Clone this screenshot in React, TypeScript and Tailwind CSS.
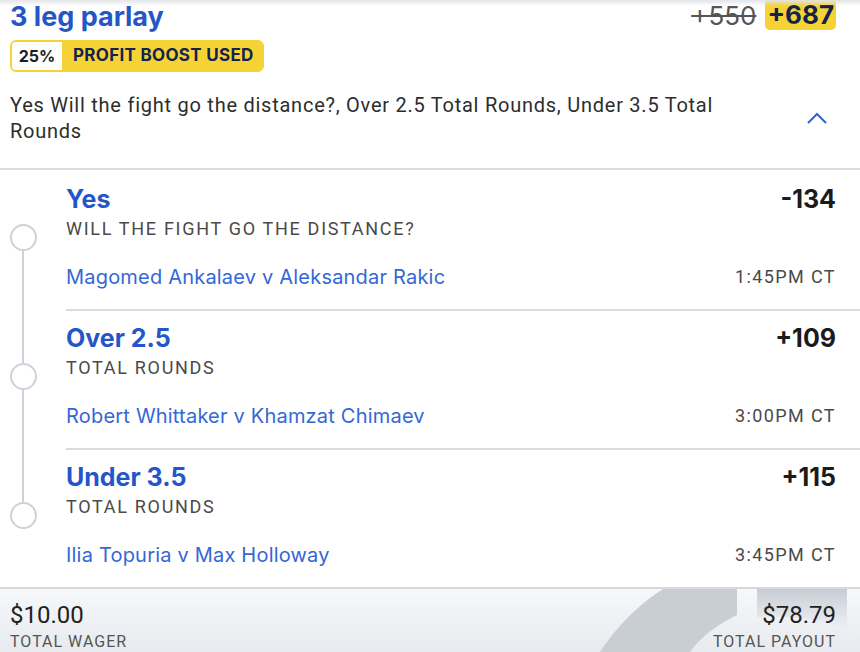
import React from "react";

type Leg = {
  pick: string;
  market: string;
  matchup: string;
  odds: string;
  time: string;
};

const legs: Leg[] = [
  {
    pick: "Yes",
    market: "WILL THE FIGHT GO THE DISTANCE?",
    matchup: "Magomed Ankalaev v Aleksandar Rakic",
    odds: "-134",
    time: "1:45PM CT",
  },
  {
    pick: "Over 2.5",
    market: "TOTAL ROUNDS",
    matchup: "Robert Whittaker v Khamzat Chimaev",
    odds: "+109",
    time: "3:00PM CT",
  },
  {
    pick: "Under 3.5",
    market: "TOTAL ROUNDS",
    matchup: "Ilia Topuria v Max Holloway",
    odds: "+115",
    time: "3:45PM CT",
  },
];

const sans = "font-['Inter','Open_Sans',sans-serif]";
const narrow = "font-['Roboto','Liberation_Sans',sans-serif]";

function LegRow({ leg, index }: { leg: Leg; index: number }) {
  const first = index === 0;
  const last = index === legs.length - 1;
  return (
    <div className="flex h-[139px]">
      {/* timeline rail */}
      <div className="flex w-[66px] shrink-0 flex-col">
        <div className="flex w-[46px] flex-col items-center">
          <div className={`h-[54px] w-[2px] ${first ? "bg-transparent" : "bg-[#cdd2d9]"}`} />
          <div className="h-[27px] w-[27px] rounded-full border-2 border-[#cdd2d9] bg-white" />
          <div className={`h-[58px] w-[2px] ${last ? "bg-transparent" : "bg-[#cdd2d9]"}`} />
        </div>
      </div>
      <div className={`flex flex-1 flex-col pr-6 ${first ? "" : "border-t-2 border-[#d8dce1]"}`}>
        <div className={`flex items-start justify-between ${first ? "pt-[15px]" : "pt-[13px]"}`}>
          <div className={`${sans} text-[25px] font-bold leading-[28px] text-[#2456c8]`}>{leg.pick}</div>
          <div className={`${sans} text-[25px] font-bold leading-[28px] text-[#1b1b1b]`}>{leg.odds}</div>
        </div>
        <div className={`${narrow} mt-[5px] text-[18px] leading-[22px] tracking-[1.7px] text-[#4a4a4a]`}>
          {leg.market}
        </div>
        <div className="mt-[25px] flex items-center justify-between">
          <div className={`${sans} text-[20px] leading-[24px] tracking-[0.2px] text-[#3467d6]`}>{leg.matchup}</div>
          <div className={`${narrow} text-[18px] leading-[24px] tracking-[1.4px] text-[#4a4a4a]`}>{leg.time}</div>
        </div>
      </div>
    </div>
  );
}

export default function App() {
  return (
    <div className="relative flex h-[652px] w-[860px] flex-col overflow-hidden bg-white">
      {/* soft shadow from the sheet above */}
      <div className="pointer-events-none absolute inset-x-0 top-0 h-[6px] bg-gradient-to-b from-[#e3e5e8] to-transparent" />

      <div className="flex h-[168px] flex-col pl-[10px] pr-6">
        <div className="flex items-start justify-between">
          <div className={`${sans} pt-[1px] text-[27px] font-bold leading-[31px] text-[#2456c8]`}>3 leg parlay</div>
          <div className="flex items-start gap-[9px]">
            <span className={`${sans} pt-[1px] text-[26px] leading-[30px] text-[#555] line-through decoration-[#555]`}>
              +550
            </span>
            <span className={`${sans} rounded-b-[5px] bg-[#f6d335] px-[2px] text-[26px] font-bold leading-[30px] text-[#14224f]`}>
              +687
            </span>
          </div>
        </div>

        <div className="mt-[8px] flex h-[32px] w-[254px] overflow-hidden rounded-[6px] border-2 border-[#f6d335]">
          <div className={`${sans} flex w-[50px] items-center justify-center bg-white text-[16px] font-bold text-[#1d1d1d]`}>
            25%
          </div>
          <div className={`${sans} flex flex-1 items-center bg-[#f6d335] pl-[11px] text-[17px] font-bold tracking-[0.3px] text-[#14224f]`}>
            PROFIT BOOST USED
          </div>
        </div>

        <div className="mt-[20px] flex items-center justify-between">
          <p className={`${narrow} w-[730px] text-[20px] leading-[26px] tracking-[0.75px] text-[#2d2d2d]`}>
            Yes Will the fight go the distance?, Over 2.5 Total Rounds, Under 3.5 Total Rounds
          </p>
          <svg width="22" height="14" viewBox="0 0 22 14" className="mr-[8px]">
            <path d="M2 12 L11 3 L20 12" fill="none" stroke="#2f63d3" strokeWidth="2" />
          </svg>
        </div>
      </div>

      <div className="h-[2px] bg-[#d8dce1]" />

      <div className="flex flex-col">
        {legs.map((leg, i) => (
          <LegRow key={leg.pick} leg={leg} index={i} />
        ))}
      </div>

      <footer className="relative flex flex-1 items-start justify-between overflow-hidden border-t-2 border-[#d5d9de] bg-gradient-to-b from-[#f6f8fb] to-[#e7eaee] pl-[10px] pr-6 pt-[12px]">
        <svg className="pointer-events-none absolute right-0 top-0" width="262" height="66" viewBox="0 0 262 66">
          <defs>
            <linearGradient id="fade" x1="0" y1="0" x2="0" y2="1">
              <stop offset="0" stopColor="#c6ccd4" />
              <stop offset="1" stopColor="#c6ccd4" stopOpacity="0" />
            </linearGradient>
          </defs>
          <path d="M65 0 L139 0 L139 26 C118 36 100 50 90 66 L0 66 C18 38 40 16 65 0 Z" fill="#c9ced5" />
          <path d="M159 0 L249 0 L249 40 C220 30 190 26 159 28 Z" fill="url(#fade)" />
        </svg>
        <div className="relative">
          <div className={`${narrow} text-[24px] leading-[28px] text-[#222]`}>$10.00</div>
          <div className={`${narrow} mt-[3px] text-[16px] leading-[20px] tracking-[1px] text-[#555]`}>TOTAL WAGER</div>
        </div>
        <div className="relative text-right">
          <div className={`${narrow} text-[24px] leading-[28px] text-[#222]`}>$78.79</div>
          <div className={`${narrow} mt-[3px] text-[16px] leading-[20px] tracking-[1px] text-[#555]`}>TOTAL PAYOUT</div>
        </div>
      </footer>
    </div>
  );
}
